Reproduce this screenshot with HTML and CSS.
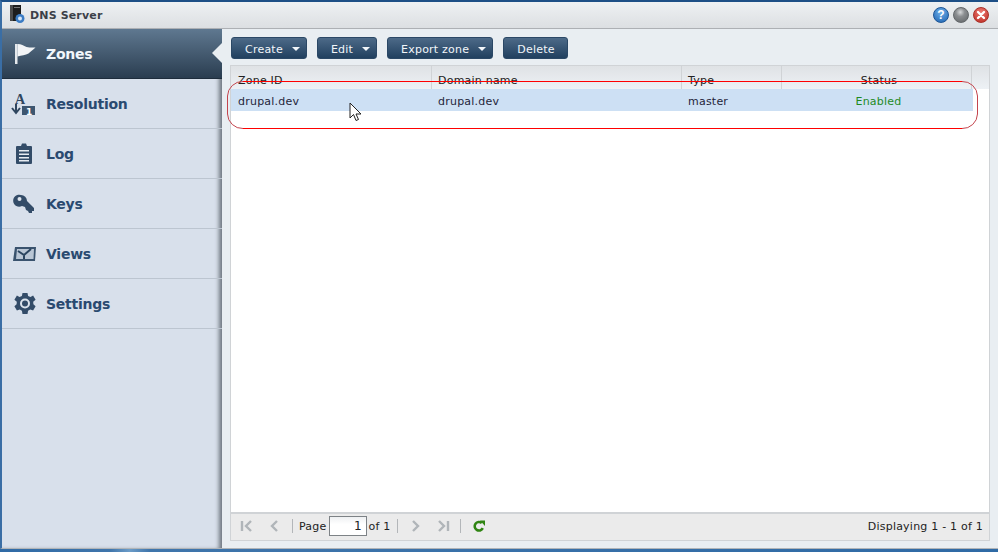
FILE: index.html
```html
<!DOCTYPE html>
<html lang="en">
<head>
<meta charset="utf-8">
<title>DNS Server</title>
<link rel="stylesheet" href="styles.css">
</head>
<body>
<div class="window">
  <header class="titlebar">
    <svg class="app-icon" width="18" height="20" viewBox="0 0 18 20"><rect x="1" y="1" width="11" height="16" fill="#1d1d1d"/><rect x="1" y="1" width="3" height="16" fill="#4a4a4a"/><rect x="5" y="3" width="6" height="1" fill="#777"/><circle cx="11" cy="14.500" r="4.500" fill="#3b7cc4"/><circle cx="11" cy="14.500" r="2" fill="#d5e6f7"/></svg>
    <span class="app-title">DNS Server</span>
    <div class="win-buttons">
      <span class="win-btn help">?</span>
      <span class="win-btn min"></span>
      <span class="win-btn close">
        <svg width="10" height="10" viewBox="0 0 10 10"><path d="M2 2l6 6M8 2l-6 6" stroke="#fff" stroke-width="2.400" stroke-linecap="round"/></svg>
      </span>
    </div>
  </header>
  <div class="main">
    <nav class="sidebar">
      <a class="nav-item active">
        <svg class="nav-icon" width="24" height="24" viewBox="0 0 24 24"><path d="M2 2h2.500v20H2z" fill="#e4e8ec"/><path d="M4.500 2c4 0 6 1.500 9 3 3 .8 6 .6 9 .6-2 2-5 4-7 6-3 1.500-7 2-11 3z" fill="#f2f4f6"/></svg>
        <span>Zones</span>
      </a>
      <a class="nav-item">
        <svg class="nav-icon" width="24" height="24" viewBox="0 0 24 24"><text x="2" y="12" class="glyph-a">A</text><path d="M3 12v9M-1 16l4 5 4-5" stroke="#2f465f" stroke-width="2" fill="none"/><rect x="9" y="14" width="13" height="9" fill="#3d5670"/><text x="13" y="22.500" class="glyph-1">1</text></svg>
        <span>Resolution</span>
      </a>
      <a class="nav-item">
        <svg class="nav-icon" width="24" height="24" viewBox="0 0 24 24"><path d="M4 4h4l1-2.500h4L14 4h4a1 1 0 0 1 1 1v16a1 1 0 0 1-1 1H4a1 1 0 0 1-1-1V5a1 1 0 0 1 1-1z" fill="#334c68"/><path d="M6 8h10v1.500H6zM6 11.500h10V13H6zM6 15h10v1.500H6zM6 18h10v1.500H6z" fill="#e6ebf1"/></svg>
        <span>Log</span>
      </a>
      <a class="nav-item">
        <svg class="nav-icon" width="24" height="24" viewBox="0 0 24 24"><path d="M8 3a6 6 0 0 1 6 6l7 7v3h-2v2h-3l-1-2-2-1-1-3-3-1A6 6 0 1 1 8 3z" fill="#334c68"/><circle cx="6.500" cy="7" r="2" fill="#dfe6ee"/></svg>
        <span>Keys</span>
      </a>
      <a class="nav-item">
        <svg class="nav-icon" width="24" height="24" viewBox="0 0 24 24"><path d="M2 5h21l-1 14H0z" fill="#3a536e"/><path d="M4 7h17l-.5 10H3z" fill="#b9c6d5"/><path d="M5 9l6 4 7-6M11 13v4" stroke="#2b4560" stroke-width="2" fill="none"/></svg>
        <span>Views</span>
      </a>
      <a class="nav-item">
        <svg class="nav-icon" width="24" height="24" viewBox="0 0 24 24"><path d="M9.500 1h5l.6 3 2.400 1 2.600-1.500 2.500 4.300-2.400 2 .2 2.400 2.200 2-2.500 4.300-2.800-1-2.200 1.300-.6 3.200h-5l-.6-3.200-2.200-1.300-2.800 1L1.400 14.200l2.200-2 .2-2.400-2.400-2L3.900 3.500 6.500 5l2.400-1z" fill="#334c68"/><circle cx="12" cy="11.500" r="5" fill="#dbe3ec"/><circle cx="12" cy="11.500" r="3" fill="#334c68"/></svg>
        <span>Settings</span>
      </a>
    </nav>
    <div class="pointer"></div>
    <section class="content">
      <div class="toolbar">
        <button class="btn">Create<i class="caret"></i></button>
        <button class="btn">Edit<i class="caret"></i></button>
        <button class="btn">Export zone<i class="caret"></i></button>
        <button class="btn">Delete</button>
      </div>
      <div class="grid">
        <div class="grid-head">
          <div class="col c-id">Zone ID</div>
          <div class="col c-name">Domain name</div>
          <div class="col c-type">Type</div>
          <div class="col c-status center">Status</div>
          <div class="col c-end"></div>
        </div>
        <div class="grid-body">
          <div class="grid-row">
            <div class="cell c-id">drupal.dev</div>
            <div class="cell c-name">drupal.dev</div>
            <div class="cell c-type">master</div>
            <div class="cell c-status center enabled">Enabled</div>
          </div>
        </div>
        <div class="pager">
          <svg class="pg-icon" width="16" height="16" viewBox="0 0 16 16"><path d="M3 3v10M12 3L7 8l5 5" stroke="#b0b5b9" stroke-width="2.400" fill="none"/></svg>
          <svg class="pg-icon gap" width="16" height="16" viewBox="0 0 16 16"><path d="M10 3L5 8l5 5" stroke="#b0b5b9" stroke-width="2.400" fill="none"/></svg>
          <i class="sep sep-before-text"></i>
          <span class="pg-text">Page</span>
          <input class="pg-input" type="text" value="1" aria-label="Page">
          <span class="pg-text">of 1</span>
          <i class="sep sep-after-text"></i>
          <svg class="pg-icon" width="16" height="16" viewBox="0 0 16 16"><path d="M6 3l5 5-5 5" stroke="#b0b5b9" stroke-width="2.400" fill="none"/></svg>
          <svg class="pg-icon gap" width="16" height="16" viewBox="0 0 16 16"><path d="M4 3l5 5-5 5M13 3v10" stroke="#b0b5b9" stroke-width="2.400" fill="none"/></svg>
          <i class="sep sep-last"></i>
          <svg class="pg-icon" width="16" height="16" viewBox="0 0 16 16"><path d="M11.800 10.200A4.300 4.300 0 1 1 10.800 5" stroke="#2f8412" stroke-width="2.600" fill="none"/><path d="M9 2.500h5V8z" fill="#2f8412"/></svg>
          <span class="pg-display">Displaying 1 - 1 of 1</span>
        </div>
      </div>
    </section>
  </div>
  <svg class="annotation" width="752" height="49" viewBox="0 0 752 49" fill="none">
    <path d="M16 .5A15 15 0 0 0 .5 15v18A15 15 0 0 0 16 47.500M735 .5A15 15 0 0 1 750.500 15v18A15 15 0 0 1 735 47.500" stroke="#c4454e"/>
    <path d="M16 .5h719M16 47.500h719" stroke="#f00"/>
  </svg>
  <svg class="cursor" width="14" height="20" viewBox="0 0 14 20"><path d="M1 1v15l3.500-3.500L7 18.500l2.500-1-2.500-5.500h5z" fill="#fff" stroke="#222" stroke-width="1"/></svg>
</div>
</body>
</html>
```
FILE: styles.css
```css
* { box-sizing: border-box; }
html, body { margin: 0; height: 552px; overflow: hidden; }
body {
  background: linear-gradient(90deg, #2f6aa5 0, #3f75ab 11%, #6c9cc8 13%, #3f75ab 15%, #2f6aa5 100%);
  font-family: "DejaVu Sans", Verdana, sans-serif;
  font-size: 11px;
  letter-spacing: .22px;
  color: #1a1a2e;
}
.window {
  position: relative;
  height: 549px;
  border-top: 2px solid #1d4f86;
  border-left: 2px solid #3a6ea5;
  border-bottom: 1px solid #b0b4b8;
  display: flex;
  flex-direction: column;
  background: #e9eef2;
}
.titlebar {
  height: 27px;
  flex: none;
  display: flex;
  align-items: center;
  padding-left: 7px;
  background: linear-gradient(#eef1f3, #dcdfe2);
  border-bottom: 1px solid #adb0b4;
}
.app-icon { margin-top: -2px; }
.app-title { margin-left: 3px; font-size: 11px; font-weight: bold; color: #3b3f48; letter-spacing: .15px; }
.win-buttons { margin-left: auto; display: flex; gap: 4px; padding-right: 9px; }
.win-btn {
  width: 16px; height: 16px; border-radius: 50%;
  display: flex; align-items: center; justify-content: center;
  color: #fff; font: bold 12px "Liberation Sans", sans-serif;
}
.help { background: radial-gradient(circle at 50% 30%, #6fb0ea, #1d62b0); border: 1px solid #1c5596; }
.min { background: radial-gradient(circle at 45% 30%, #d6d8da 0, #8b8e91 35%, #5f6366 100%); border: 1px solid #63676a; }
.close { background: radial-gradient(circle at 50% 30%, #ec7a72, #bb2a22); border: 1px solid #a93028; }
.main { flex: 1; display: flex; min-height: 0; position: relative; }
.sidebar {
  width: 220px;
  flex: none;
  background: #d8e0eb;
  box-shadow: inset -5px 0 4px -2px #6f7780;
  display: flex;
  flex-direction: column;
}
.nav-item {
  height: 50px;
  flex: none;
  display: flex;
  align-items: center;
  gap: 9px;
  padding-left: 11px;
  border-bottom: 1px solid #bcc5d0;
  font-size: 14px;
  font-weight: bold;
  letter-spacing: -.25px;
  color: #2a4a70;
}
.nav-item.active {
  background: linear-gradient(#5f7890, #2a3d50);
  border-bottom: 1px solid #1e2d3c;
  color: #f2f7fc;
}
.nav-icon { flex: none; overflow: visible; }
.glyph-a { font: bold 14px "Liberation Serif", serif; letter-spacing: 0; fill: #2f465f; }
.glyph-1 { font: bold 9px "DejaVu Sans", sans-serif; letter-spacing: 0; fill: #fff; }
.pointer {
  position: absolute;
  left: 210px;
  top: 14px;
  width: 10px;
  height: 20px;
  background: #e9eef2;
  clip-path: polygon(0 50%, 100% 0, 100% 100%);
}
.content { flex: 1; min-width: 0; display: flex; flex-direction: column; padding: 8px 8px 7px 8px; }
.toolbar { display: flex; gap: 10px; padding-left: 1px; margin-bottom: 6px; }
.btn {
  height: 22px;
  padding: 2px 12px 0 13px;
  display: flex;
  align-items: center;
  gap: 9px;
  font: 11px "DejaVu Sans", sans-serif;
  letter-spacing: .22px;
  color: #f2f6fa;
  background: linear-gradient(#4d6a88, #21405f);
  border: 1px solid #2b4866;
  border-radius: 3px;
}
.caret { width: 0; height: 0; margin-right: -6px; border: 4px solid transparent; border-top: 4px solid #f2f6fa; border-bottom: 0; }
.grid {
  flex: 1;
  min-height: 0;
  display: flex;
  flex-direction: column;
  border: 1px solid #d0d3d6;
  background: #fff;
}
.grid-head {
  height: 23px;
  flex: none;
  display: flex;
  background: linear-gradient(#dfe2e5, #edf1f5);
  color: #222;
}
.col, .cell { padding-left: 7px; white-space: nowrap; }
.col { border-right: 1px solid #d0d3d6; line-height: 29px; }
.c-id { width: 200px; }
.c-name { width: 250px; }
.c-type { width: 100px; }
.c-status { width: 190px; padding-left: 5px; }
.grid-head .c-id { width: 201px; }
.grid-head .c-name, .grid-head .c-type { padding-left: 6px; }
.c-end { flex: 1; padding: 0; border-right: 0; }
.center { text-align: center; }
.grid-body { flex: 1; min-height: 0; }
.grid-row { display: flex; height: 22px; width: 742px; background: #cde0f4; color: #1f1f3a; }
.cell { line-height: 26px; }
.enabled { color: #1f8a1f; }
.pager {
  height: 28px;
  flex: none;
  display: flex;
  align-items: center;
  padding: 0 6px 2px 8px;
  background: #ebebeb;
  border-top: 2px solid #d0d3d6;
}
.pg-icon { flex: none; }
.gap { margin-left: 12px; }
.sep { width: 1px; height: 14px; background: #b3b6b9; margin: 0 9px; flex: none; }
.sep-before-text { margin-right: 6px; }
.sep-after-text { margin-left: 6px; }
.sep-last { margin-right: 10px; }
.pg-text { color: #222; }
.pg-input {
  width: 38px;
  height: 20px;
  margin: 0 2px;
  padding: 0 4px;
  border: 1px solid #7d8286;
  background: linear-gradient(#eef0f2, #fff 40%);
  text-align: right;
  font: 12px "DejaVu Sans", sans-serif;
  color: #222;
}
.pg-display { margin-left: auto; color: #222; }
.annotation { position: absolute; left: 225px; top: 79px; pointer-events: none; }
.cursor { position: absolute; left: 347px; top: 100px; }
```
